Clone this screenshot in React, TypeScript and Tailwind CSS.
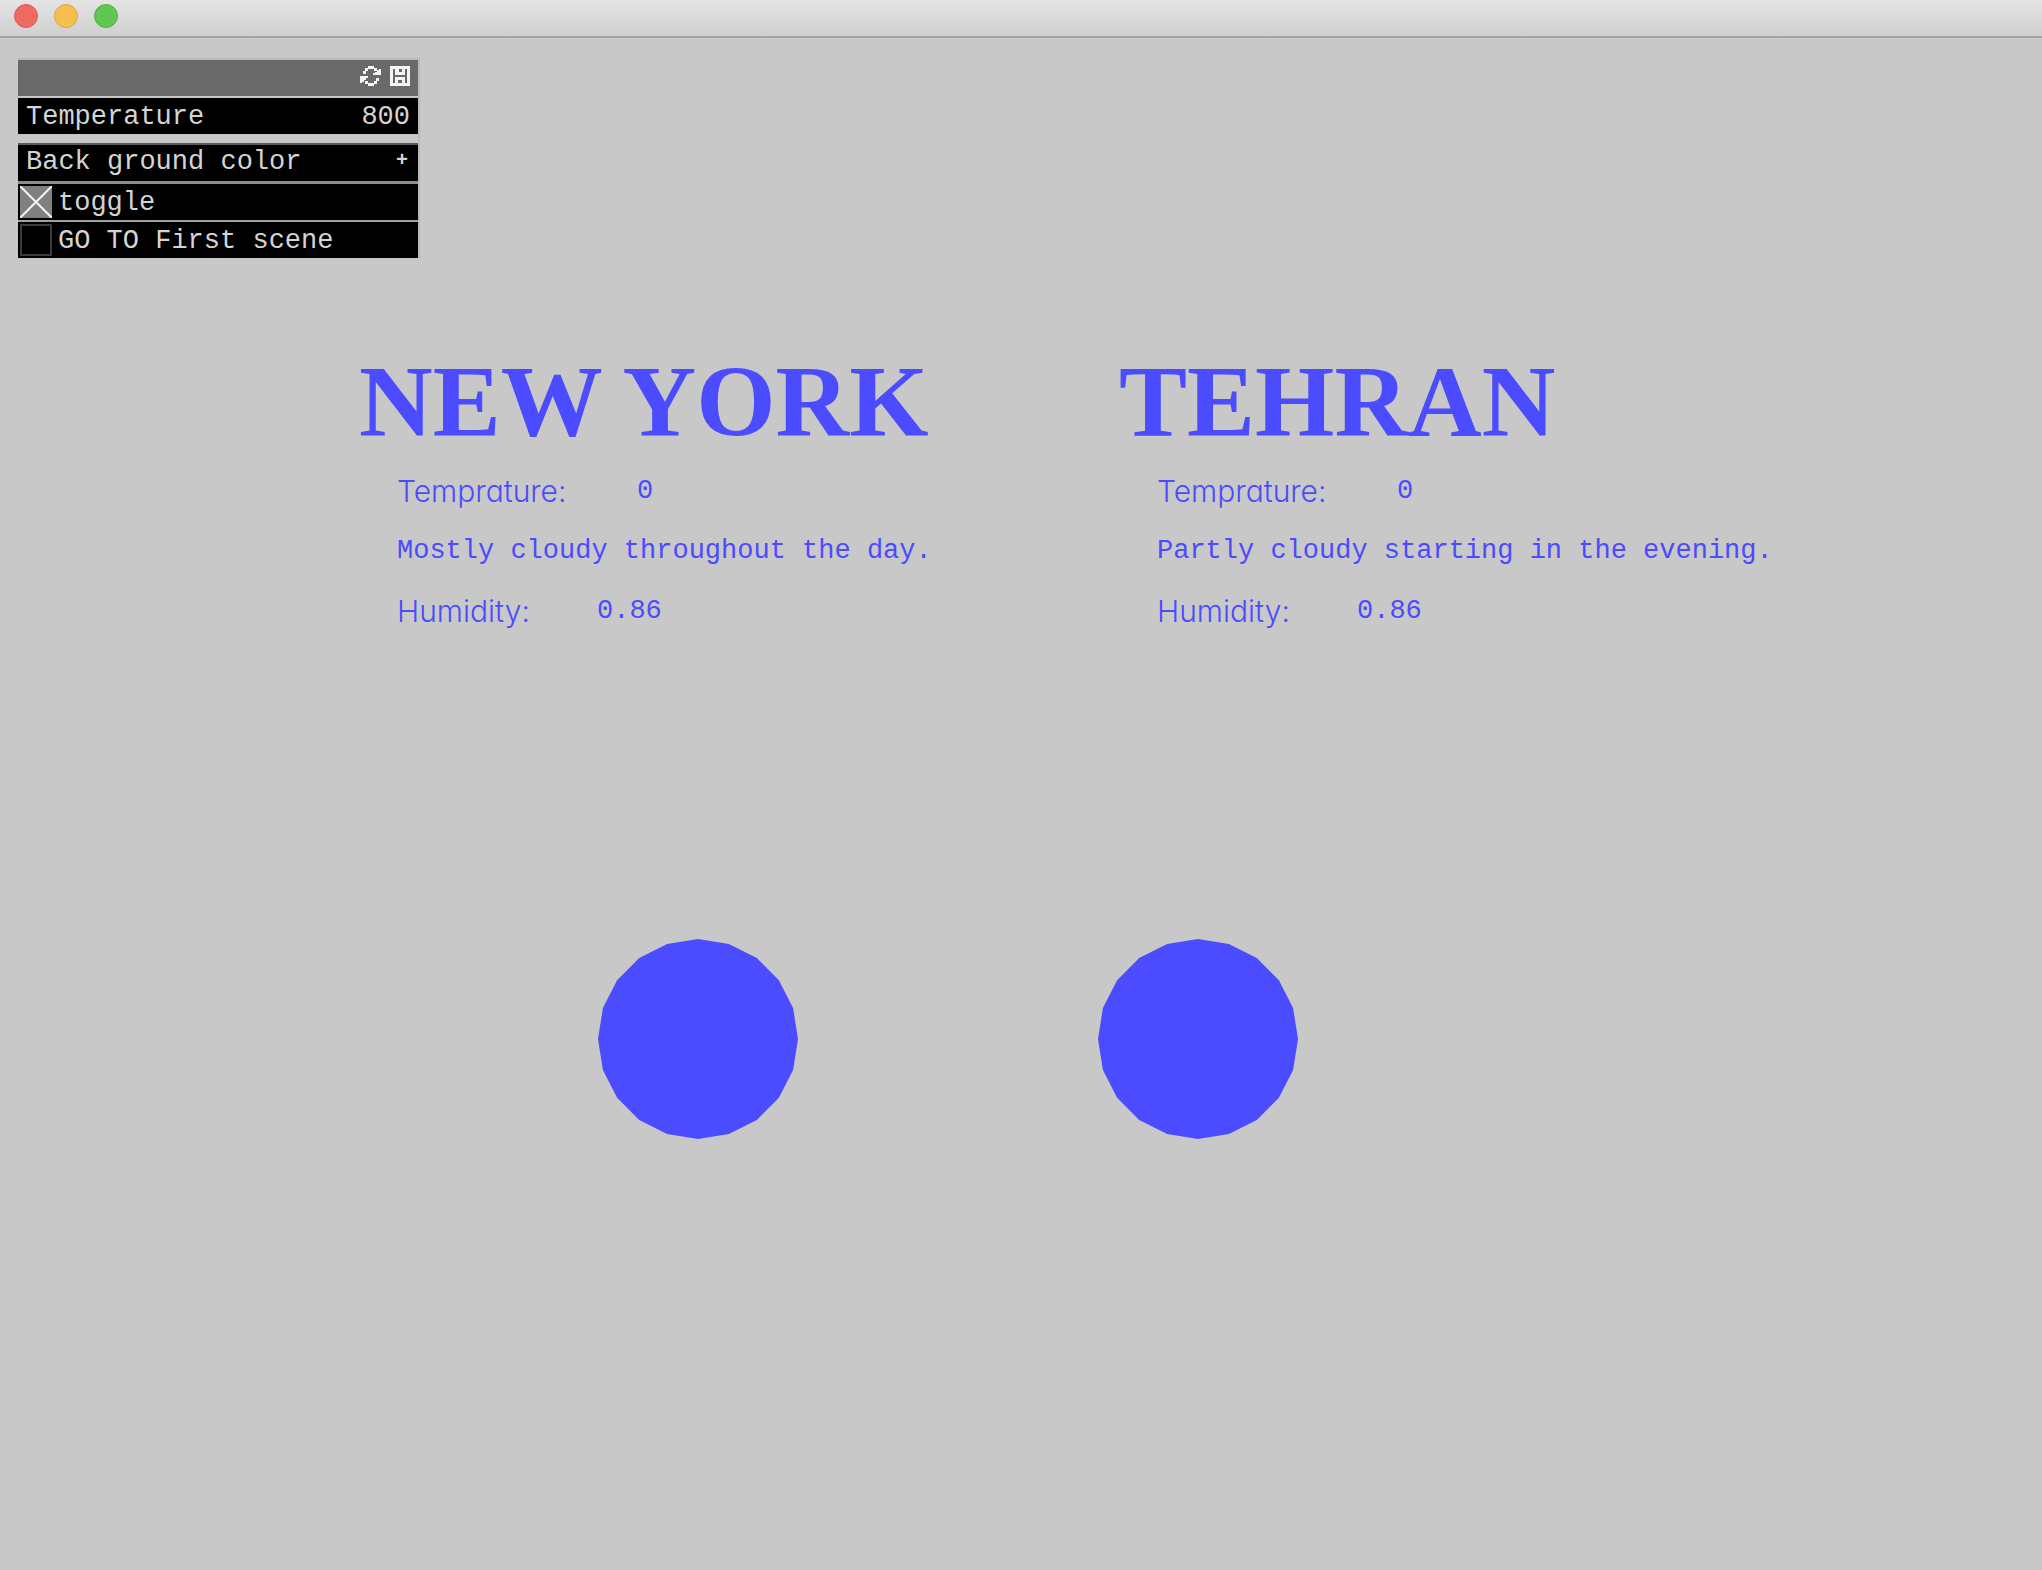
import { useState } from "react";

type City = {
  name: string;
  temperature: string;
  summary: string;
  humidity: string;
};

const cities: City[] = [
  {
    name: "NEW YORK",
    temperature: "0",
    summary: "Mostly cloudy throughout the day.",
    humidity: "0.86",
  },
  {
    name: "TEHRAN",
    temperature: "0",
    summary: "Partly cloudy starting in the evening.",
    humidity: "0.86",
  },
];

// The scene draws its circles with twenty segments.
const circlePoints = Array.from({ length: 20 }, (_, i) => {
  const angle = (i * Math.PI) / 10;
  return `${(100 + 100 * Math.cos(angle)).toFixed(1)},${(100 + 100 * Math.sin(angle)).toFixed(1)}`;
}).join(" ");

function TitleBar() {
  return (
    <header className="flex h-[38px] items-start gap-4 border-b-2 border-[#a3a3a3] bg-linear-to-b from-[#e4e4e4] to-[#cfcfcf] px-3.5 pt-1">
      <button aria-label="Close" className="size-6 rounded-full border border-[#e0594f] bg-[#ed6b60]" />
      <button aria-label="Minimize" className="size-6 rounded-full border border-[#e0a63c] bg-[#f5bf4f]" />
      <button aria-label="Zoom" className="size-6 rounded-full border border-[#4fb13e] bg-[#61c654]" />
    </header>
  );
}

function RefreshIcon() {
  return (
    <svg viewBox="0 0 22 20" className="h-5 w-[22px]" fill="#f4f4f4">
      <path d="M8 0h6v3H8zM5 2h3v3H5zM14 2h3v3h-3zM3 5h3v3H3z" />
      <path d="M21 3v6h-8v-2h2v-1h2V4h2V3z" />
      <path d="M0 10h8v2H6v2H4v2H2v1H0z" />
      <path d="M8 17h6v3H8zM14 15h3v3h-3zM5 15h3v3H5zM16 12h3v3h-3z" />
    </svg>
  );
}

function SaveIcon() {
  return (
    <svg viewBox="0 0 20 20" className="size-5">
      <path fill="#f4f4f4" d="M0 0h20v20H0z" />
      <path fill="#696969" d="M3 3h2v14H3zM15 3h2v14h-2zM5 9h10v2H5zM9 3h3v3H9zM8 14h4v3H8z" />
    </svg>
  );
}

function Toggle({ id, label, initial }: { id: string; label: string; initial: boolean }) {
  const [on, setOn] = useState(initial);
  return (
    <div className="flex h-9 items-center gap-1.5 bg-black pl-0.5">
      <span className="relative size-8">
        <input
          id={id}
          type="checkbox"
          checked={on}
          onChange={() => setOn(!on)}
          className="block size-8 appearance-none border-2 border-[#3c3c3c] bg-black checked:border-[#808080] checked:bg-[#808080]"
        />
        {on && (
          <svg viewBox="0 0 32 32" className="pointer-events-none absolute inset-0 size-8" stroke="#f4f4f4" strokeWidth="2">
            <path d="M0 0L32 32M32 0L0 32" />
          </svg>
        )}
      </span>
      <label htmlFor={id} className="pt-0.5">{label}</label>
    </div>
  );
}

function ControlPanel() {
  const [temperature, setTemperature] = useState(800);
  return (
    <section className="w-[402px] border-t-2 border-r-2 border-[#b9b9b9] font-['Liberation_Mono',monospace] text-[27px] leading-9 text-[#d4d4d4]">
      <div className="flex h-9 items-start justify-end gap-2 bg-[#696969] pt-1.5 pr-2">
        <button aria-label="Reload settings"><RefreshIcon /></button>
        <button aria-label="Save settings"><SaveIcon /></button>
      </div>
      <div className="relative mt-0.5 flex h-9 justify-between bg-black px-2 leading-[38px]">
        <label htmlFor="temperature">Temperature</label>
        <span>{temperature}</span>
        <input
          id="temperature"
          type="range"
          min={800}
          max={2000}
          value={temperature}
          onChange={(e) => setTemperature(Number(e.target.value))}
          className="absolute inset-0 opacity-0"
        />
      </div>
      <button className="mt-[9px] flex h-[38px] w-full justify-between border-t-2 border-[#5c5c5c] bg-black px-2 leading-[34px]">
        <span>Back ground color</span>
        <span className="pr-0.5 text-xl leading-8 font-bold">+</span>
      </button>
      <div className="flex flex-col gap-0.5 border-t-3 border-[#8c8c8c] bg-[#a0a0a0]">
        <Toggle id="toggle" label="toggle" initial={true} />
        <Toggle id="first-scene" label="GO TO First scene" initial={false} />
      </div>
    </section>
  );
}

const labelStyle = "font-['Inter',sans-serif] text-[30px] font-light [font-feature-settings:'cv11']";

function CityReport({ city }: { city: City }) {
  return (
    <article className="w-[760px]">
      <h2 className="font-['Liberation_Serif',serif] text-[102px] leading-[104px] font-bold whitespace-nowrap">{city.name}</h2>
      <div className="pt-[7px] pl-[38px] font-['Liberation_Mono',monospace] text-[27px] leading-[60px]">
        <p className="flex">
          <span className={`w-60 ${labelStyle}`}>Temprature:</span>
          <span>{city.temperature}</span>
        </p>
        <p className="whitespace-nowrap">{city.summary}</p>
        <p className="flex">
          <span className={`w-50 ${labelStyle}`}>Humidity:</span>
          <span>{city.humidity}</span>
        </p>
      </div>
    </article>
  );
}

function Circle() {
  return (
    <svg viewBox="0 0 200 200" className="size-50" fill="#4b4bff">
      <polygon points={circlePoints} />
    </svg>
  );
}

export default function App() {
  return (
    <div className="min-h-screen bg-[#c8c8c8]">
      <TitleBar />
      <main className="text-[#4b4bff]">
        <div className="pt-5 pl-[18px]">
          <ControlPanel />
        </div>
        <div className="flex pt-[92px] pl-[359px]">
          {cities.map((city) => (
            <CityReport key={city.name} city={city} />
          ))}
        </div>
        <div className="flex gap-[300px] pt-[298px] pl-[598px]">
          <Circle />
          <Circle />
        </div>
      </main>
    </div>
  );
}
